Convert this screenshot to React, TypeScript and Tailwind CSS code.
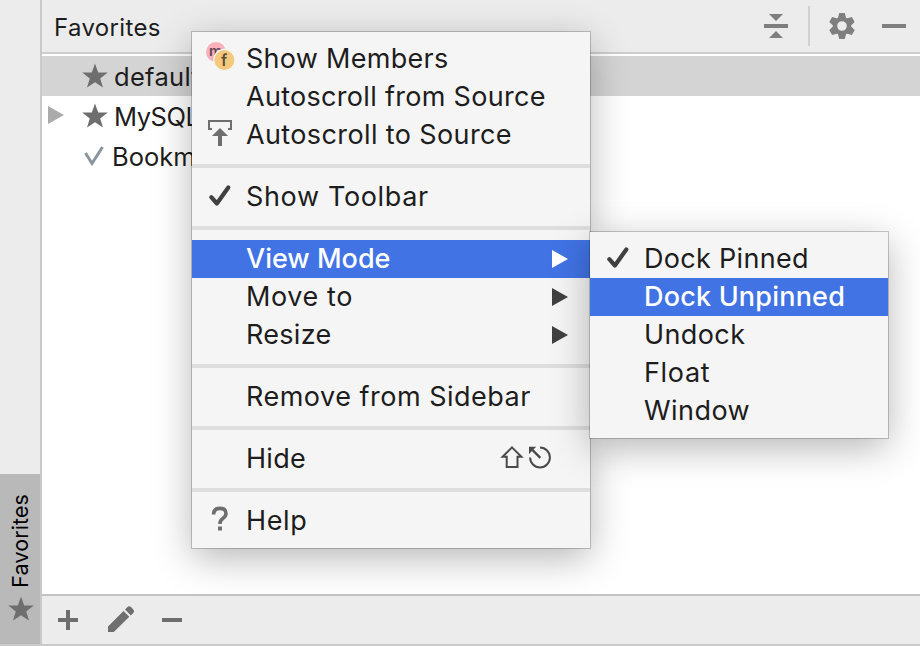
import React from 'react';

const Star = () => (
  <svg width="26" height="26" viewBox="0 0 26 26" className="shrink-0">
    <path fill="#6e6e6e" d="M13 0.5 L16.2 9.5 L25.8 9.6 L18.2 15.4 L21 24.6 L13 19.2 L5 24.6 L7.8 15.4 L0.2 9.6 L9.8 9.5 Z" />
  </svg>
);

const Check = () => (
  <svg width="24" height="24" viewBox="0 0 24 24" className="mb-[3px]">
    <path d="M3.3 13.2 L8.9 19.5 L20.3 3.5" fill="none" stroke="#404040" strokeWidth="4.2" strokeLinecap="round" strokeLinejoin="round" />
  </svg>
);

const Members = () => (
  <svg width="30" height="30" viewBox="0 0 30 30" className="mb-[4px] ml-[2px]">
    <circle cx="10" cy="10" r="10" fill="#f9b0bd" />
    <text x="9.6" y="13.6" textAnchor="middle" fontSize="14.5" fontWeight="600" fill="#5d4650" className="font-['Inter',sans-serif]">m</text>
    <circle cx="18.4" cy="18" r="11.2" fill="#f5f5f5" />
    <circle cx="18.4" cy="18" r="10" fill="#f5c97c" />
    <text x="18" y="23.8" textAnchor="middle" fontSize="16" fontWeight="600" fill="#5c4f3c" className="font-['Inter',sans-serif]">f</text>
  </svg>
);

const ScrollTo = () => (
  <svg width="24" height="26" viewBox="0 0 24 26" className="mb-[4px]">
    <path d="M4 9 H1 V1 H23 V9 H20" fill="none" stroke="#6e6e6e" strokeWidth="2" />
    <path d="M12 8 L20 16 H14 V26 H10 V16 H4 Z" fill="#6e6e6e" />
  </svg>
);

const Arrow = ({ color }: { color: string }) => (
  <svg width="16" height="18" viewBox="0 0 16 18" className="mr-[22px]">
    <path d="M0 0 L16 9 L0 18 Z" fill={color} />
  </svg>
);

const Shortcut = () => (
  <svg width="54" height="26" viewBox="0 0 54 26" className="mr-[36px] mb-[2px]">
    <path d="M12 2.4 L21.4 11.8 H17.5 V22 H6.7 V11.8 H2.6 Z" fill="none" stroke="#4a4a4a" strokeWidth="2" />
    <path d="M40 2.6 A9.9 9.9 0 1 1 30.1 12.5" fill="none" stroke="#4a4a4a" strokeWidth="2" />
    <path d="M40.3 12.8 L32 4.5" fill="none" stroke="#4a4a4a" strokeWidth="2.4" />
    <path d="M29 1.7 H36.2 L29 8.9 Z" fill="#4a4a4a" />
  </svg>
);

type ItemProps = {
  label: string;
  spacing: string;
  icon?: React.ReactNode;
  right?: React.ReactNode;
  selected?: boolean;
};

const Item = ({ label, spacing, icon, right, selected }: ItemProps) => (
  <div className={`flex h-[38px] shrink-0 items-center ${selected ? 'bg-[#4173e5] font-[450] text-white' : 'text-[#1d1d1d]'}`}>
    <div className="mr-[-2px] flex w-14 shrink-0 items-center justify-center">{icon}</div>
    <span className={`flex-1 whitespace-nowrap leading-[38px] ${spacing}`}>{label}</span>
    {right}
  </div>
);

const Separator = () => <div className="my-[10px] h-1 shrink-0 bg-[#dedede]" />;

export default function App() {
  return (
    <div className="relative flex h-[646px] w-[920px] overflow-hidden bg-white font-['Inter',sans-serif] text-[27px] text-[#1d1d1d]">
      <aside className="flex w-[42px] shrink-0 flex-col justify-end border-r-2 border-b-2 border-[#c9c9c9] bg-[#ececec]">
        <div className="flex h-[170px] flex-col items-center justify-end bg-[#b9b9b9] pb-[22px]">
          <span className="rotate-180 text-[21.5px] leading-[26px] tracking-[0.1px] whitespace-nowrap text-black [writing-mode:vertical-rl]">Favorites</span>
          <div className="mt-[8px] ml-[2px] h-[26px]"><Star /></div>
        </div>
      </aside>
      <div className="flex min-w-0 flex-1 flex-col">
        <header className="flex h-[54px] shrink-0 items-center border-b-2 border-[#cdcdcd] bg-[#ececec] pl-[12px]">
          <span className="flex-1 pt-[4px] text-[24px] tracking-[0.35px]">Favorites</span>
          <svg width="24" height="24" viewBox="0 0 24 24" className="mr-[20px]">
            <path d="M5 0 H19 L12 7 Z M0 10 H24 V14 H0 Z M12 17 L19 24 H5 Z" fill="#7f7f7f" />
          </svg>
          <div className="h-[40px] w-[2px] bg-[#d1d1d1]" />
          <svg width="26" height="26" viewBox="-13 -13 26 26" className="ml-[19px]" fill="#7f7f7f">
            <circle r="7" fill="none" stroke="#7f7f7f" strokeWidth="4.4" />
            {[0, 60, 120, 180, 240, 300].map((angle) => (
              <path key={angle} transform={`rotate(${angle})`} d="M-2.8 -13 H2.8 L4.2 -7.5 H-4.2 Z" />
            ))}
          </svg>
          <div className="mr-[14px] ml-[27px] h-1 w-6 bg-[#7f7f7f]" />
        </header>
        <main className="flex flex-1 flex-col pt-[2px] text-[25.5px]">
          <div className="flex h-10 items-center bg-[#d4d4d4] pl-[40px]">
            <Star /><span className="ml-[6px] pt-[2px] tracking-[0.3px]">default</span>
          </div>
          <div className="flex h-10 items-center pl-[6px]">
            <svg width="16" height="18" viewBox="0 0 16 18" className="mr-[18px] mb-[2px]"><path d="M0 0 L16 9 L0 18 Z" fill="#ababab" /></svg>
            <Star /><span className="ml-[6px] pt-[2px] tracking-[-0.45px]">MySQL</span>
          </div>
          <div className="flex h-10 items-center pl-[41px]">
            <svg width="22" height="22" viewBox="0 0 22 22"><path d="M2.5 8 L9 18.5 L19.5 2" fill="none" stroke="#8a959e" strokeWidth="3" /></svg>
            <span className="ml-[7px] pt-[2px]">Bookmarks</span>
          </div>
        </main>
        <footer className="flex h-[52px] shrink-0 items-center border-t-2 border-b-2 border-t-[#c3c3c3] border-b-[#c9c9c9] bg-[#ececec] pl-[16px]">
          <svg width="20" height="20" viewBox="0 0 20 20"><path d="M8 0 H12 V8 H20 V12 H12 V20 H8 V12 H0 V8 H8 Z" fill="#6e6e6e" /></svg>
          <svg width="28" height="28" viewBox="0 0 28 28" className="mb-[2px] ml-[29px]">
            <path d="M1 21.5 L16.5 6 L22.3 11.8 L6.8 27 H1 Z M18 4.6 L20.5 2.1 Q22.2 0.6 24 2.1 L26.3 4.4 Q28 6.2 26.3 8 L23.8 10.4 Z" fill="#6e6e6e" />
          </svg>
          <div className="ml-[27px] h-1 w-5 bg-[#6e6e6e]" />
        </footer>
      </div>

      <div className="absolute top-[32px] left-[192px] flex h-[516px] w-[398px] flex-col bg-[#f5f5f5] py-2 shadow-[0_0_0_1px_rgba(0,0,0,0.2),0_10px_36px_rgba(0,0,0,0.29)]">
        <Item label="Show Members" spacing="tracking-[0.28px]" icon={<Members />} />
        <Item label="Autoscroll from Source" spacing="tracking-[0.3px]" />
        <Item label="Autoscroll to Source" spacing="tracking-[0.38px]" icon={<ScrollTo />} />
        <Separator />
        <Item label="Show Toolbar" spacing="tracking-[0.65px]" icon={<Check />} />
        <Separator />
        <Item label="View Mode" spacing="tracking-[0px]" right={<Arrow color="#ffffff" />} selected />
        <Item label="Move to" spacing="tracking-[0.6px]" right={<Arrow color="#404040" />} />
        <Item label="Resize" spacing="tracking-[0.3px]" right={<Arrow color="#404040" />} />
        <Separator />
        <Item label="Remove from Sidebar" spacing="tracking-[0.5px]" />
        <Separator />
        <Item label="Hide" spacing="tracking-[0.3px]" right={<Shortcut />} />
        <Separator />
        <Item
          label="Help"
          spacing="tracking-[0.6px]"
          icon={
            <svg width="18" height="26" viewBox="0 0 18 26" className="mb-[4px]">
              <path d="M2.6 8.5 Q2.6 2.4 8.9 2.4 Q15 2.4 15 7.5 Q15 10.3 11.8 12.5 Q8.9 14.5 8.9 18" fill="none" stroke="#6e6e6e" strokeWidth="3.6" />
              <path d="M7 20.5 H11 V24.5 H7 Z" fill="#6e6e6e" />
            </svg>
          }
        />
      </div>

      <div className="absolute top-[232px] left-[590px] flex h-[206px] w-[298px] flex-col bg-[#f5f5f5] py-2 shadow-[0_0_0_1px_rgba(0,0,0,0.2),0_10px_36px_rgba(0,0,0,0.29)]">
        <Item label="Dock Pinned" spacing="tracking-[0.3px]" icon={<Check />} />
        <Item label="Dock Unpinned" spacing="tracking-[0.2px]" selected />
        <Item label="Undock" spacing="tracking-[0.4px]" />
        <Item label="Float" spacing="tracking-[0.65px]" />
        <Item label="Window" spacing="tracking-[0.45px]" />
      </div>
    </div>
  );
}
